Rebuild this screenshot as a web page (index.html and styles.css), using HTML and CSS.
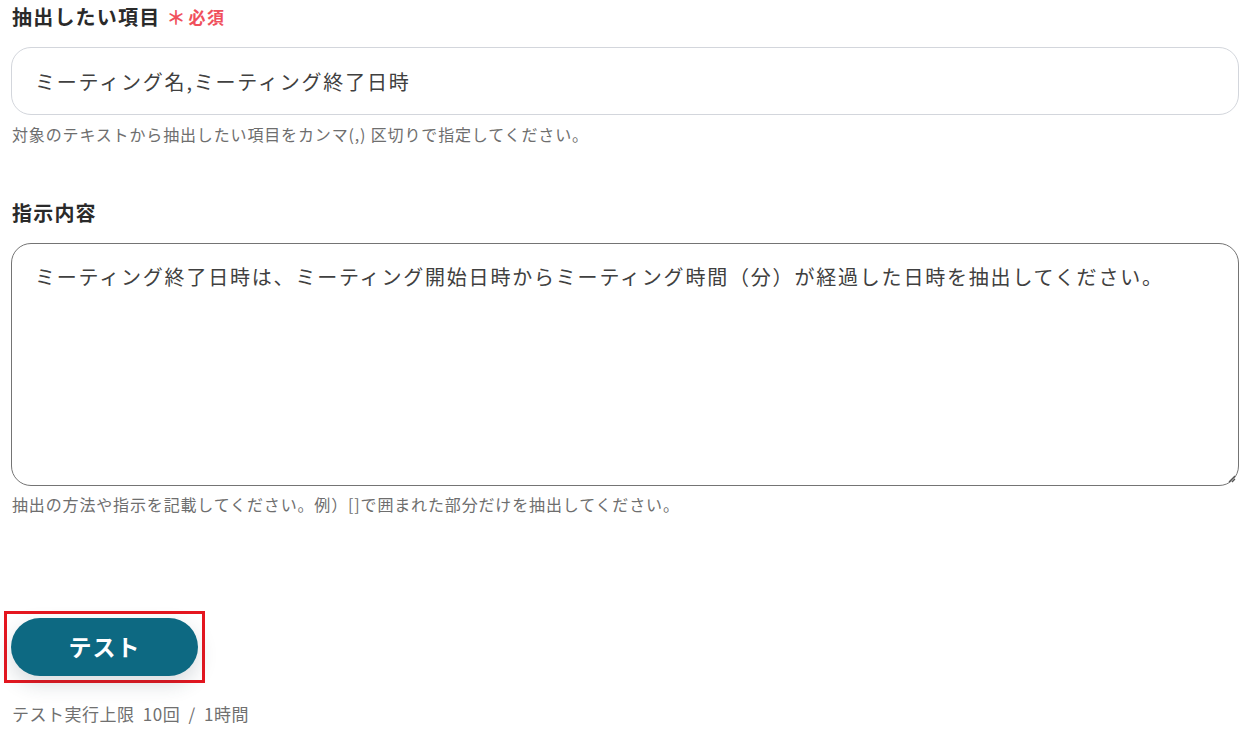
FILE: index.html
```html
<!DOCTYPE html>
<html lang="ja">
<head>
<meta charset="utf-8">
<link rel="stylesheet" href="styles.css">
</head>
<body>
<div class="form">
  <div class="field">
    <div class="label">抽出したい項目<span class="req"><span class="ast">＊</span>必須</span></div>
    <div class="input">ミーティング名,ミーティング終了日時</div>
    <div class="help">対象のテキストから抽出したい項目をカンマ(,) 区切りで指定してください。</div>
  </div>
  <div class="field field2">
    <div class="label">指示内容</div>
    <div class="textarea">ミーティング終了日時は、ミーティング開始日時からミーティング時間（分）が経過した日時を抽出してください。
      <svg class="grip" width="10" height="10" viewBox="0 0 10 10"><path d="M9 3 L3 9 M9 6 L6 9" stroke="#555" stroke-width="1.2"/></svg>
    </div>
    <div class="help">抽出の方法や指示を記載してください。例）[]で囲まれた部分だけを抽出してください。</div>
  </div>
  <div class="actions">
    <div class="highlight"><button class="btn">テスト</button></div>
    <div class="limit">テスト実行上限 10回 / 1時間</div>
  </div>
</div>
</body>
</html>
```

FILE: styles.css
```css
* { box-sizing: border-box; }
html, body { margin: 0; padding: 0; background: #fff; }
body {
  font-family: "Noto Sans CJK JP", "Noto Sans", sans-serif;
  color: #2b2b2b;
  width: 1247px;
  height: 731px;
  overflow: hidden;
}
.form {
  padding: 3px 8px 0 11px;
}
.label {
  font-size: 20px;
  font-weight: 700;
  letter-spacing: 1.2px;
  line-height: 28px;
  padding-left: 1px;
  color: #2a2a2a;
  display: flex;
  align-items: center;
}
.req {
  color: #f0505c;
  font-size: 17px;
  letter-spacing: 1.5px;
  margin-left: 6px;
  display: inline-flex;
  align-items: center;
}
.ast { font-size: 19px; margin-right: 3px; letter-spacing: 0; }
.input {
  margin-top: 16px;
  height: 68px;
  border: 1px solid #d3d6dc;
  border-radius: 20px;
  padding: 0 0 0 23px;
  display: flex;
  align-items: center;
  font-size: 20px;
  letter-spacing: 1.8px;
  color: #404040;
}
.help {
  font-size: 16px;
  letter-spacing: 0.85px;
  color: #6e6e6e;
  line-height: 20px;
  margin-top: 9px;
  padding-left: 1px;
}
.field2 { margin-top: 55px; }
.textarea {
  position: relative;
  margin-top: 16px;
  height: 243px;
  border: 1px solid #747474;
  border-radius: 20px;
  padding: 19px 0 0 23px;
  font-size: 20px;
  letter-spacing: 1.8px;
  line-height: 28px;
  color: #404040;
}
.grip { position: absolute; right: 2px; bottom: 2px; }
.field2 .help { margin-top: 8px; }
.actions { margin-top: 97px; }
.highlight {
  display: inline-block;
  margin-left: -7px;
  border: 3px solid #e5161f;
  padding: 4px;
}
.btn {
  display: block;
  width: 187px;
  height: 58px;
  border: none;
  border-radius: 29px;
  background: #0d6982;
  color: #fff;
  font-family: inherit;
  font-size: 23px;
  font-weight: 700;
  letter-spacing: 1px;
  padding-bottom: 3px;
  box-shadow: 0 8px 20px rgba(40, 60, 80, 0.18);
}
.limit {
  margin-top: 18px;
  font-size: 17px;
  letter-spacing: 0.5px;
  word-spacing: 4px;
  color: #707070;
  padding-left: 1px;
}
```
